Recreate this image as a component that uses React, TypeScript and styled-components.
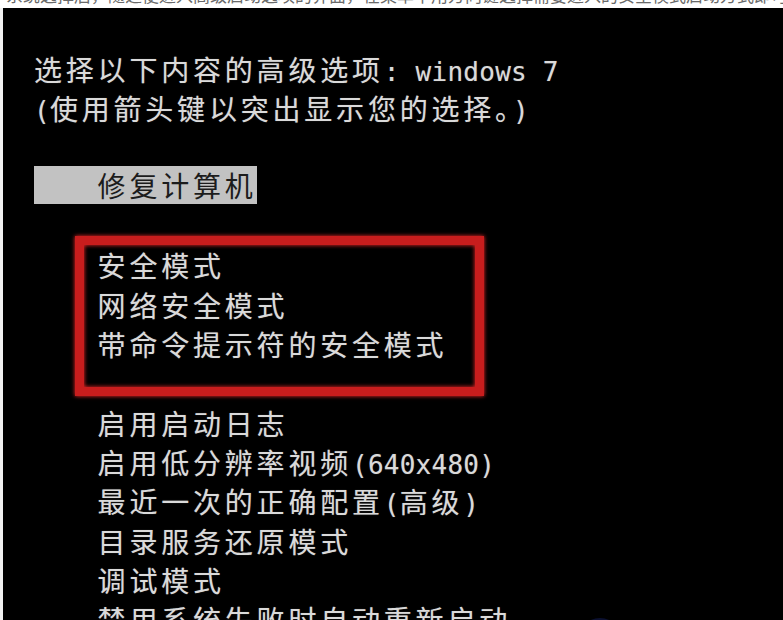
import React from "react";
import styled, { createGlobalStyle } from "styled-components";

const GlobalStyle = createGlobalStyle`
    html, body {
        margin: 0;
        padding: 0;
        background: #ffffff;
        overflow: hidden;
    }
`;

const CELL = 15.9;
const LINE = 39.3;

const Page = styled.div`
    width: 783px;
    height: 620px;
    display: flex;
    flex-direction: column;
    background: #f2f2f2;
`;

const Caption = styled.div`
    height: 8px;
    overflow: hidden;
    background: #ffffff;
    padding-left: 6px;
`;

const CaptionText = styled.div`
    margin-top: -15px;
    font-family: "Noto Sans CJK SC", sans-serif;
    font-size: 17px;
    line-height: 20px;
    color: #6a6a6a;
    white-space: nowrap;
`;

const Screen = styled.div`
    flex: 1;
    margin-left: 3px;
    background: #000;
    position: relative;
    overflow: hidden;
    padding: 42px 0 0 31px;
`;

const Line = styled.div<{ indent?: number }>`
    height: ${LINE}px;
    line-height: ${LINE}px;
    white-space: pre;
    padding-left: ${props => (props.indent || 0) * CELL}px;
    font-family: "Noto Sans CJK SC", sans-serif;
    font-size: 28px;
    letter-spacing: 3.8px;
    color: #dadada;
    text-shadow: 0 0 1px rgba(255, 255, 255, 0.35);
`;

const Latin = styled.span`
    font-family: "DejaVu Sans Mono", monospace;
    font-size: 26px;
    letter-spacing: 0.25px;
`;

const Highlight = styled.span`
    display: inline-block;
    height: 38px;
    margin-top: -2px;
    padding-left: ${4 * CELL}px;
    background: #c2c2c2;
    color: #1c1c1c;
    text-shadow: none;
    vertical-align: top;
`;

const Callout = styled.div`
    position: absolute;
    left: 72px;
    top: 228px;
    width: 409px;
    height: 160px;
    box-sizing: border-box;
    border: 9px solid #c81d1d;
    box-shadow: 0 0 4px #ff2b2b, inset 0 0 4px #ff2b2b;
`;

const Watermark = styled.svg`
    position: absolute;
    left: 584px;
    top: 600px;
`;

const menu: React.ReactNode[] = [
    "安全模式",
    "网络安全模式",
    "带命令提示符的安全模式",
    "",
    "启用启动日志",
    <>启用低分辨率视频<Latin>(640x480)</Latin></>,
    <>最近一次的正确配置<Latin>(</Latin>高级<Latin>)</Latin></>,
    "目录服务还原模式",
    "调试模式",
    "禁用系统失败时自动重新启动",
    "禁用驱动程序签名强制",
];

export default function App() {
    return (
        <Page>
            <GlobalStyle />
            <Caption>
                <CaptionText>
                    系统选择后，随之便进入高级启动选项的界面，在菜单中用方向键选择需要进入的安全模式启动方式即可。
                </CaptionText>
            </Caption>
            <Screen>
                <Line>选择以下内容的高级选项<Latin>: windows 7</Latin></Line>
                <Line><Latin>(</Latin>使用箭头键以突出显示您的选择。<Latin>)</Latin></Line>
                <Line />
                <Line><Highlight>修复计算机</Highlight></Line>
                <Line />
                {menu.map((item, i) => (
                    <Line key={i} indent={4}>{item}</Line>
                ))}
                <Callout />
                <Watermark width="30" height="20" viewBox="0 0 30 20">
                    <ellipse cx="13" cy="16" rx="12" ry="6" fill="#0b1030" />
                    <path d="M10 20 L13 13 L16 20 Z" fill="#8fdc2a" />
                </Watermark>
            </Screen>
        </Page>
    );
}
